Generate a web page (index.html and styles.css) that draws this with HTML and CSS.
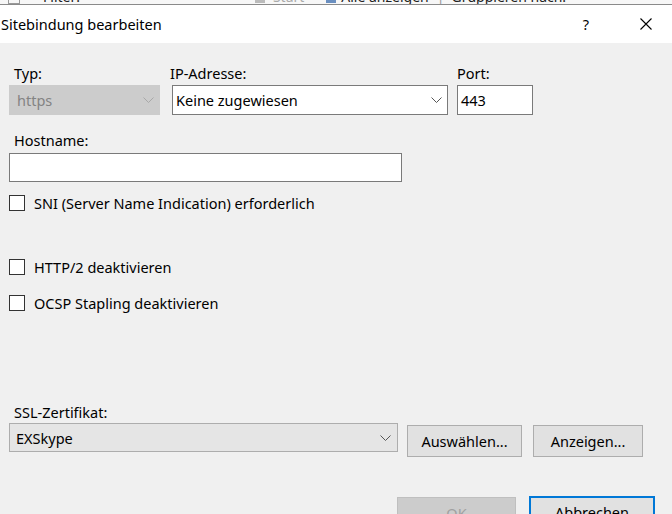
FILE: index.html
```html
<!DOCTYPE html>
<html lang="de">
<head>
    <meta charset="UTF-8">
    <meta name="viewport" content="width=device-width, initial-scale=1.0">
    <title>Sitebindung bearbeiten</title>
    <link rel="stylesheet" href="styles.css">
</head>
<body>

    <!-- bit of the IIS window behind the dialog -->
    <div class="behind">
        <div class="behind-row">
            <span class="behind-box"></span>
            <span class="behind-filter">Filter:</span>
            <span class="behind-arrow first">&#9660;</span>
            <span class="behind-icon"></span>
            <span class="behind-start">Start</span>
            <span class="behind-arrow">&#9660;</span>
            <span class="behind-icon blue"></span>
            <span class="behind-all">Alle anzeigen</span>
            <span class="behind-sep">|</span>
            <span>Gruppieren nach:</span>
        </div>
    </div>

    <div class="titlebar">
        <span class="title">Sitebindung bearbeiten</span>
        <span class="help">?</span>
        <span class="close">
            <svg width="12" height="12" viewBox="0 0 12 12">
                <path d="M0.5 0.5 L11.5 11.5 M11.5 0.5 L0.5 11.5" stroke="#000" stroke-width="1.1" fill="none"/>
            </svg>
        </span>
    </div>

    <div class="dialog">
        <div class="row-top">
            <div class="field field-typ">
                <div class="label label-indent">Typ:</div>
                <div class="combo combo-disabled">
                    <span class="combo-text">https</span>
                    <svg class="chevron" width="11" height="6" viewBox="0 0 11 6">
                        <polyline points="0.5,0.5 5.5,5.5 10.5,0.5" stroke="#a8a8a8" fill="none"/>
                    </svg>
                </div>
            </div>
            <div class="field field-ip">
                <div class="label label-ip">IP-Adresse:</div>
                <div class="combo combo-white">
                    <span class="combo-text">Keine zugewiesen</span>
                    <svg class="chevron" width="11" height="6" viewBox="0 0 11 6">
                        <polyline points="0.5,0.5 5.5,5.5 10.5,0.5" stroke="#555" fill="none"/>
                    </svg>
                </div>
            </div>
            <div class="field field-port">
                <div class="label">Port:</div>
                <div class="textbox port-box">443</div>
            </div>
        </div>

        <div class="label label-indent label-host">Hostname:</div>
        <div class="textbox host-box"></div>

        <div class="check check-sni"><span class="checkbox"></span>SNI (Server Name Indication) erforderlich</div>
        <div class="check check-http2"><span class="checkbox"></span>HTTP/2 deaktivieren</div>
        <div class="check check-ocsp"><span class="checkbox"></span>OCSP Stapling deaktivieren</div>

        <div class="label label-indent label-ssl">SSL-Zertifikat:</div>
        <div class="row-ssl">
            <div class="combo combo-ssl">
                <span class="combo-text">EXSkype</span>
                <svg class="chevron" width="11" height="6" viewBox="0 0 11 6">
                    <polyline points="0.5,0.5 5.5,5.5 10.5,0.5" stroke="#555" fill="none"/>
                </svg>
            </div>
            <button class="btn btn-select">Auswählen...</button>
            <button class="btn btn-show">Anzeigen...</button>
        </div>

        <div class="footer">
            <button class="btn btn-ok" disabled>OK</button>
            <button class="btn btn-cancel">Abbrechen</button>
        </div>
    </div>

</body>
</html>
```

FILE: styles.css
```css
body {
    margin: 0;
    width: 672px;
    height: 514px;
    overflow: hidden;
    background-color: #f0f0f0;
    font-family: "Noto Sans", "Open Sans", sans-serif;
    font-size: 14.5px;
    color: #000;
}

/* window behind */
.behind {
    height: 4px;
    overflow: hidden;
    background-color: #f7f7f7;
    border-bottom: 1px solid #8a8a8a;
}

.behind-row {
    display: flex;
    align-items: center;
    height: 16px;
    margin-top: -12px;
    font-size: 14px;
    color: #222;
    white-space: nowrap;
}

.behind-box {
    width: 10px;
    height: 14px;
    margin-left: 8px;
    border: 1px solid #999;
}
.behind-filter { margin-left: 23px; }
.behind-arrow { font-size: 9px; margin-left: 8px; }
.behind-arrow.first { margin-left: 160px; }
.behind-icon {
    width: 10px;
    height: 14px;
    margin-left: 6px;
    background-color: #bbb;
}
.behind-icon.blue { background-color: #6a8fc0; margin-left: 5px; }
.behind-start { margin-left: 8px; color: #aaa; }
.behind-all { margin-left: 5px; }
.behind-sep { margin: 0 7px 0 8px; color: #999; }

/* title bar */
.titlebar {
    height: 38px;
    background-color: #fff;
    display: flex;
    align-items: center;
}

.title {
    flex: 1;
    margin-left: 1px;
}

.help {
    margin-right: 51px;
}

.close {
    display: flex;
    margin-right: 20px;
}

/* dialog body */
.dialog {
    padding-left: 9px;
}

.label {
    height: 18px;
    line-height: 18px;
}

.label-indent { padding-left: 5px; }
.label-ip { margin-left: -2px; }

.row-top {
    display: flex;
    margin-top: 21px;
}

.field .combo,
.field .textbox {
    margin-top: 3px;
}

.field-typ { width: 151px; margin-right: 12px; }
.field-ip { width: 276px; margin-right: 9px; }
.field-port { width: 76px; }

.combo,
.textbox {
    box-sizing: border-box;
    height: 30px;
    display: flex;
    align-items: center;
    border: 1px solid #7a7a7a;
    background-color: #fff;
}

.combo-text { flex: 1; }

.chevron { margin-right: 5px; }

.combo-disabled {
    background-color: #cccccc;
    border-color: #cccccc;
    color: #838383;
}
.combo-disabled .combo-text { padding-left: 7px; }

.combo-white .combo-text { padding-left: 3px; }

.port-box { padding-left: 3px; }

.label-host { margin-top: 16px; }

.host-box {
    width: 393px;
    height: 29px;
    margin-top: 4px;
}

.check {
    display: flex;
    align-items: center;
    height: 18px;
}

.checkbox {
    box-sizing: border-box;
    width: 16px;
    height: 16px;
    margin-right: 9px;
    border: 1px solid #333;
    background-color: #fff;
}

.check-sni { margin-top: 12px; }
.check-http2 { margin-top: 46px; }
.check-ocsp { margin-top: 18px; }

.label-ssl { margin-top: 91px; }

.row-ssl {
    display: flex;
    align-items: flex-start;
    margin-top: 2px;
}

.combo-ssl {
    width: 389px;
    height: 29px;
    background-color: #e5e5e5;
    border-color: #adadad;
}
.combo-ssl .combo-text { padding-left: 6px; }
.combo-ssl .chevron { margin-right: 6px; }

.btn {
    box-sizing: border-box;
    height: 32px;
    padding: 0;
    border: 1px solid #adadad;
    background-color: #e1e1e1;
    font-family: inherit;
    font-size: 14.5px;
    color: #000;
}

.btn-select { width: 115px; margin: 2px 0 0 9px; }
.btn-show { width: 110px; margin: 2px 0 0 11px; }

.footer {
    display: flex;
    justify-content: flex-end;
    margin-top: 39px;
    padding-right: 17px;
}

.btn-ok {
    width: 119px;
    margin-top: 1px;
    background-color: #cccccc;
    border-color: #bfbfbf;
    color: #a0a0a0;
}

.btn-cancel {
    width: 126px;
    margin-left: 13px;
    border: 2px solid #0078d7;
}
```
